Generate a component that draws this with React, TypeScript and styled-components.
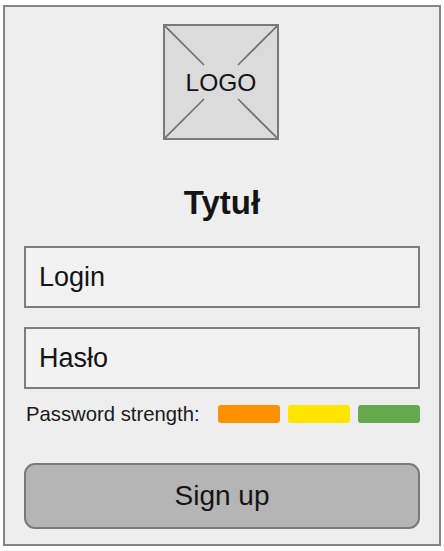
import React from "react";
import styled, { createGlobalStyle } from "styled-components";

const GlobalStyle = createGlobalStyle`
  html, body {
    margin: 0;
    padding: 0;
    background: #ffffff;
  }
  body {
    font-family: "Liberation Sans", Arial, sans-serif;
    color: #111111;
  }
`;

const Frame = styled.div`
  box-sizing: border-box;
  width: 438px;
  height: 541px;
  margin: 5px 0 0 3px;
  border: 2px solid #858585;
  background: #eeeeee;
  padding: 17px 19px 0 19px;
  display: flex;
  flex-direction: column;
`;

const LogoBox = styled.div`
  position: relative;
  box-sizing: border-box;
  align-self: center;
  margin-right: 2px;
  width: 116px;
  height: 116px;
  border: 2px solid #7a7a7a;
  background: #dbdbdb;
  display: flex;
  align-items: center;
  justify-content: center;
`;

const LogoCross = styled.svg`
  position: absolute;
  inset: 0;
  width: 100%;
  height: 100%;
`;

const LogoLabel = styled.span`
  position: relative;
  font-size: 24.5px;
  line-height: 1;
  margin-top: 2px;
  color: #141414;
`;

const Title = styled.h1`
  margin: 45px 0 0;
  text-align: center;
  font-size: 33px;
  line-height: 36px;
  font-weight: bold;
  color: #141414;
`;

const Field = styled.div<{ $gap: number }>`
  box-sizing: border-box;
  height: 62px;
  margin-top: ${(p) => p.$gap}px;
  border: 2px solid #7d7d7d;
  background: #f2f2f2;
  display: flex;
  align-items: center;
  padding-left: 13px;
  font-size: 27px;
  color: #141414;
`;

const StrengthRow = styled.div`
  margin-top: 16px;
  height: 18px;
  display: flex;
  align-items: center;
  gap: 8px;
`;

const StrengthLabel = styled.span`
  flex: 1;
  font-size: 20.3px;
  line-height: 18px;
  margin-left: 2px;
  color: #1a1a1a;
  white-space: nowrap;
`;

const StrengthBar = styled.div<{ $color: string }>`
  width: 62px;
  height: 18px;
  border-radius: 3px;
  background: ${(p) => p.$color};
`;

const SubmitButton = styled.button`
  box-sizing: border-box;
  margin-top: 40px;
  height: 66px;
  width: 100%;
  border: 2px solid #7a7a7a;
  border-radius: 11px;
  background: #b5b5b5;
  font-family: "Liberation Sans", Arial, sans-serif;
  font-size: 28px;
  color: #141414;
  cursor: pointer;
`;

const bars = ["#ff9100", "#ffe500", "#66a84e"];

const App = () => {
  return (
    <>
      <GlobalStyle />
      <Frame>
        <LogoBox>
          <LogoCross viewBox="0 0 112 112">
            <g stroke="#6e6e6e" strokeWidth="1.6">
              <line x1="0" y1="0" x2="39" y2="39" />
              <line x1="112" y1="0" x2="73" y2="39" />
              <line x1="0" y1="112" x2="39" y2="73" />
              <line x1="112" y1="112" x2="73" y2="73" />
            </g>
          </LogoCross>
          <LogoLabel>LOGO</LogoLabel>
        </LogoBox>
        <Title>Tytuł</Title>
        <Field $gap={25}>Login</Field>
        <Field $gap={19}>Hasło</Field>
        <StrengthRow>
          <StrengthLabel>Password strength:</StrengthLabel>
          {bars.map((c) => (
            <StrengthBar key={c} $color={c} />
          ))}
        </StrengthRow>
        <SubmitButton>Sign up</SubmitButton>
      </Frame>
    </>
  );
};

export default App;
